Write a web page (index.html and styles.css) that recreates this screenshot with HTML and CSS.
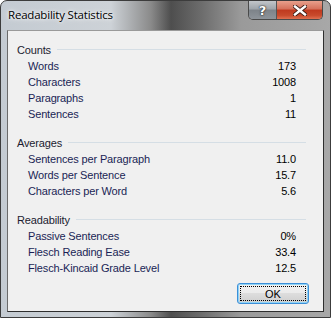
FILE: index.html
```html
<!DOCTYPE html>
<html>
<head>
<title>Readability Statistics</title>
<meta http-equiv="content-type" content="text/html; charset=UTF-8">
<link rel="stylesheet" href="styles.css">
</head>
<body>
<div class="window">
	<div class="titlebar">
		<span class="caption">Readability Statistics</span>
		<div class="caption-buttons">
			<div class="cbtn help">?</div>
			<div class="cbtn close">
				<svg width="14" height="11" viewBox="0 0 14 11"><path d="M2 1.5 L12 9.5 M12 1.5 L2 9.5" stroke="#3a1a14" stroke-width="4.2" stroke-linecap="square"/><path d="M2 1.5 L12 9.5 M12 1.5 L2 9.5" stroke="#fff" stroke-width="2.4" stroke-linecap="square"/></svg>
			</div>
		</div>
	</div>
	<div class="client">
		<div class="group">
			<div class="group-title"><span>Counts</span></div>
			<div class="row"><span>Words</span><span>173</span></div>
			<div class="row"><span>Characters</span><span>1008</span></div>
			<div class="row"><span>Paragraphs</span><span>1</span></div>
			<div class="row"><span>Sentences</span><span>11</span></div>
		</div>
		<div class="group">
			<div class="group-title"><span>Averages</span></div>
			<div class="row"><span>Sentences per Paragraph</span><span>11.0</span></div>
			<div class="row"><span>Words per Sentence</span><span>15.7</span></div>
			<div class="row"><span>Characters per Word</span><span>5.6</span></div>
		</div>
		<div class="group">
			<div class="group-title"><span>Readability</span></div>
			<div class="row"><span>Passive Sentences</span><span>0%</span></div>
			<div class="row"><span>Flesch Reading Ease</span><span>33.4</span></div>
			<div class="row"><span>Flesch-Kincaid Grade Level</span><span>12.5</span></div>
		</div>
		<div class="button-row">
			<button class="ok"><span>OK</span></button>
		</div>
	</div>
</div>
</body>
</html>
```

FILE: styles.css
```css
html, body		{ margin:0; padding:0; background:#fff; }
body			{ font-family:"Liberation Sans", Arial, sans-serif; font-size:11px; color:#000; }
.window			{ width:329px; height:316px; border:1px solid #3c3c3c; border-radius:7px 7px 0 0; display:flex; flex-direction:column;
				  background:linear-gradient(90deg, #c4cbd2 0px, #cdd2d7 110px, #8a8a8a 150px, #4e4e4e 170px, #6c6c6c 200px, #9a9a9a 240px, #a8a8a8 331px); }
.titlebar		{ height:29px; display:flex; align-items:flex-start; justify-content:space-between; flex-shrink:0; }
.caption		{ font-family:"Open Sans", sans-serif; font-size:11.5px; margin:6px 0 0 7px; color:#000; text-shadow:0 0 6px #fff, 0 0 3px #fff; letter-spacing:-0.2px; }
.caption-buttons	{ display:flex; margin-right:7px; border:1px solid #4a4a4a; border-top:0; border-radius:0 0 5px 5px; overflow:hidden; height:18px; }
.cbtn			{ display:flex; align-items:center; justify-content:center; height:18px; font-weight:bold; }
.help			{ width:27px; font-family:"DejaVu Sans", sans-serif; font-size:13px; color:#fff; text-shadow:0 0 2px #222, 0 0 1px #000;
				  background:linear-gradient(#c2c6ca, #9ea4aa 45%, #7d8389 50%, #8e949a); border-right:1px solid #555; }
.close			{ width:45px; background:linear-gradient(#e8a08c, #d4705a 45%, #c0391e 50%, #c84a2c 80%, #e07050); }
.client			{ flex:1; margin:0 6px 6px 6px; border:1px solid; border-color:#9a9a9a #2e2e2e #2e2e2e #6a6a6a; background:#f0f0f0;
				  padding:10px 17px 7px 9px; display:flex; flex-direction:column; letter-spacing:-0.15px; }
.group			{ margin-bottom:12px; }
.group-title	{ display:flex; align-items:center; height:17px; color:#1c1c30; }
.group-title:after	{ content:""; flex:1; height:1px; background:#d5dee5; margin-left:6px; margin-top:-1px; }
.row			{ display:flex; justify-content:space-between; height:16px; line-height:16px; padding:0 10px 0 11px; color:#1a1f55; }
.row span:last-child	{ color:#000; }
.button-row		{ display:flex; justify-content:flex-end; margin-top:-5px; margin-right:-3px; }
.ok				{ width:72px; height:21px; padding:2px; border:1px solid #3c8fd8; border-radius:3px; font-family:inherit; font-size:11px; color:#000;
				  background:linear-gradient(#f2f2f2, #ebebeb 45%, #dddddd 50%, #cfcfcf); box-shadow:inset 0 0 0 1px #8fd3f6; }
.ok span		{ display:block; height:100%; line-height:15px; border:1px dotted #000; box-sizing:border-box; }
```
